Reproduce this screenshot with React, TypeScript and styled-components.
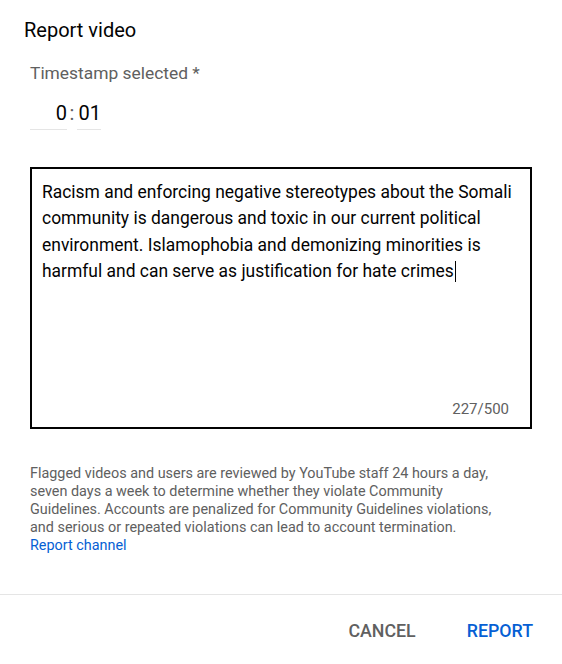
import React from 'react'
import styled, { createGlobalStyle } from 'styled-components'

const GlobalStyle = createGlobalStyle`
  html, body {
    margin: 0;
    padding: 0;
    background: #fff;
  }
  body {
    font-family: Roboto, "Noto Sans", Arial, sans-serif;
    -webkit-font-smoothing: antialiased;
  }
`

const reportText =
  'Racism and enforcing negative stereotypes about the Somali community is dangerous and toxic in our current political environment. Islamophobia and demonizing minorities is harmful and can serve as justification for hate crimes'

export default function App() {
  const [minutes] = React.useState('0')
  const [seconds] = React.useState('01')
  const maxLength = 500
  const used = 227

  return (
    <React.Fragment>
      <GlobalStyle />
      <Dialog>
        <Title>Report video</Title>
        <Body>
          <Label>Timestamp selected *</Label>
          <TimeRow>
            <TimeField width={37}>{minutes}</TimeField>
            <Colon>:</Colon>
            <TimeField width={24}>{seconds}</TimeField>
          </TimeRow>

          <TextBox>
            <TextContent>
              {reportText}
              <Caret />
            </TextContent>
            <Counter>
              {used}/{maxLength}
            </Counter>
          </TextBox>

          <Note>
            Flagged videos and users are reviewed by YouTube staff 24 hours a day, seven days a week to
            determine whether they violate Community Guidelines. Accounts are penalized for Community
            Guidelines violations, and serious or repeated violations can lead to account termination.
            <br />
            <NoteLink>Report channel</NoteLink>
          </Note>
        </Body>
        <Divider />
        <Actions>
          <ActionButton>Cancel</ActionButton>
          <ActionButton primary>Report</ActionButton>
        </Actions>
      </Dialog>
    </React.Fragment>
  )
}

const Dialog = styled.div`
  width: 562px;
  height: 664px;
  display: flex;
  flex-direction: column;
  background: #fff;
  color: #030303;

  & > * {
    flex-shrink: 0;
  }
`

const Title = styled.h2`
  margin: 0;
  padding: 17px 24px 0;
  font-size: 20px;
  line-height: 26px;
  font-weight: 400;
  color: #030303;
`

const Body = styled.div`
  padding: 0 30px;
  display: flex;
  flex-direction: column;
`

const Label = styled.div`
  margin-top: 18px;
  font-size: 17.4px;
  line-height: 24px;
  color: #606060;
`

const TimeRow = styled.div`
  display: flex;
  align-items: flex-start;
  margin-top: 16px;
`

const TimeField = styled.div<{ width: number }>`
  width: ${(p) => p.width}px;
  padding-bottom: 4px;
  text-align: right;
  font-size: 20px;
  line-height: 24px;
  color: #030303;
  border-bottom: 1px solid #e5e5e5;
`

const Colon = styled.span`
  width: 10px;
  text-align: center;
  font-size: 20px;
  line-height: 24px;
  color: #606060;
`

const TextBox = styled.div`
  margin-top: 37px;
  height: 262px;
  box-sizing: border-box;
  border: 2px solid #030303;
  padding: 10px 12px 8px 10px;
  display: flex;
  flex-direction: column;
`

const TextContent = styled.div`
  flex: 1;
  font-size: 17.45px;
  line-height: 26.4px;
  color: #030303;
`

const Caret = styled.span`
  display: inline-block;
  width: 1px;
  height: 21px;
  margin-left: 1px;
  vertical-align: -5px;
  background: #030303;
`

const Counter = styled.div`
  margin-right: 9px;
  text-align: right;
  font-size: 15px;
  line-height: 20px;
  color: #606060;
`

const Note = styled.div`
  margin-top: 36px;
  margin-right: 20px;
  font-size: 14.4px;
  line-height: 18.1px;
  color: #606060;
`

const NoteLink = styled.a`
  color: #065fd4;
  cursor: pointer;
  text-decoration: none;
`

const Divider = styled.div`
  margin-top: 39px;
  height: 1px;
  background: #e5e5e5;
`

const Actions = styled.div`
  display: flex;
  justify-content: flex-end;
  gap: 19px;
  padding: 14px 13px 0;
`

const ActionButton = styled.button<{ primary?: boolean }>`
  border: none;
  background: none;
  padding: 10px 16px;
  font-family: inherit;
  font-size: 17.8px;
  line-height: 24px;
  font-weight: 500;
  text-transform: uppercase;
  color: ${(p) => (p.primary ? '#065fd4' : '#606060')};
  cursor: pointer;
`
